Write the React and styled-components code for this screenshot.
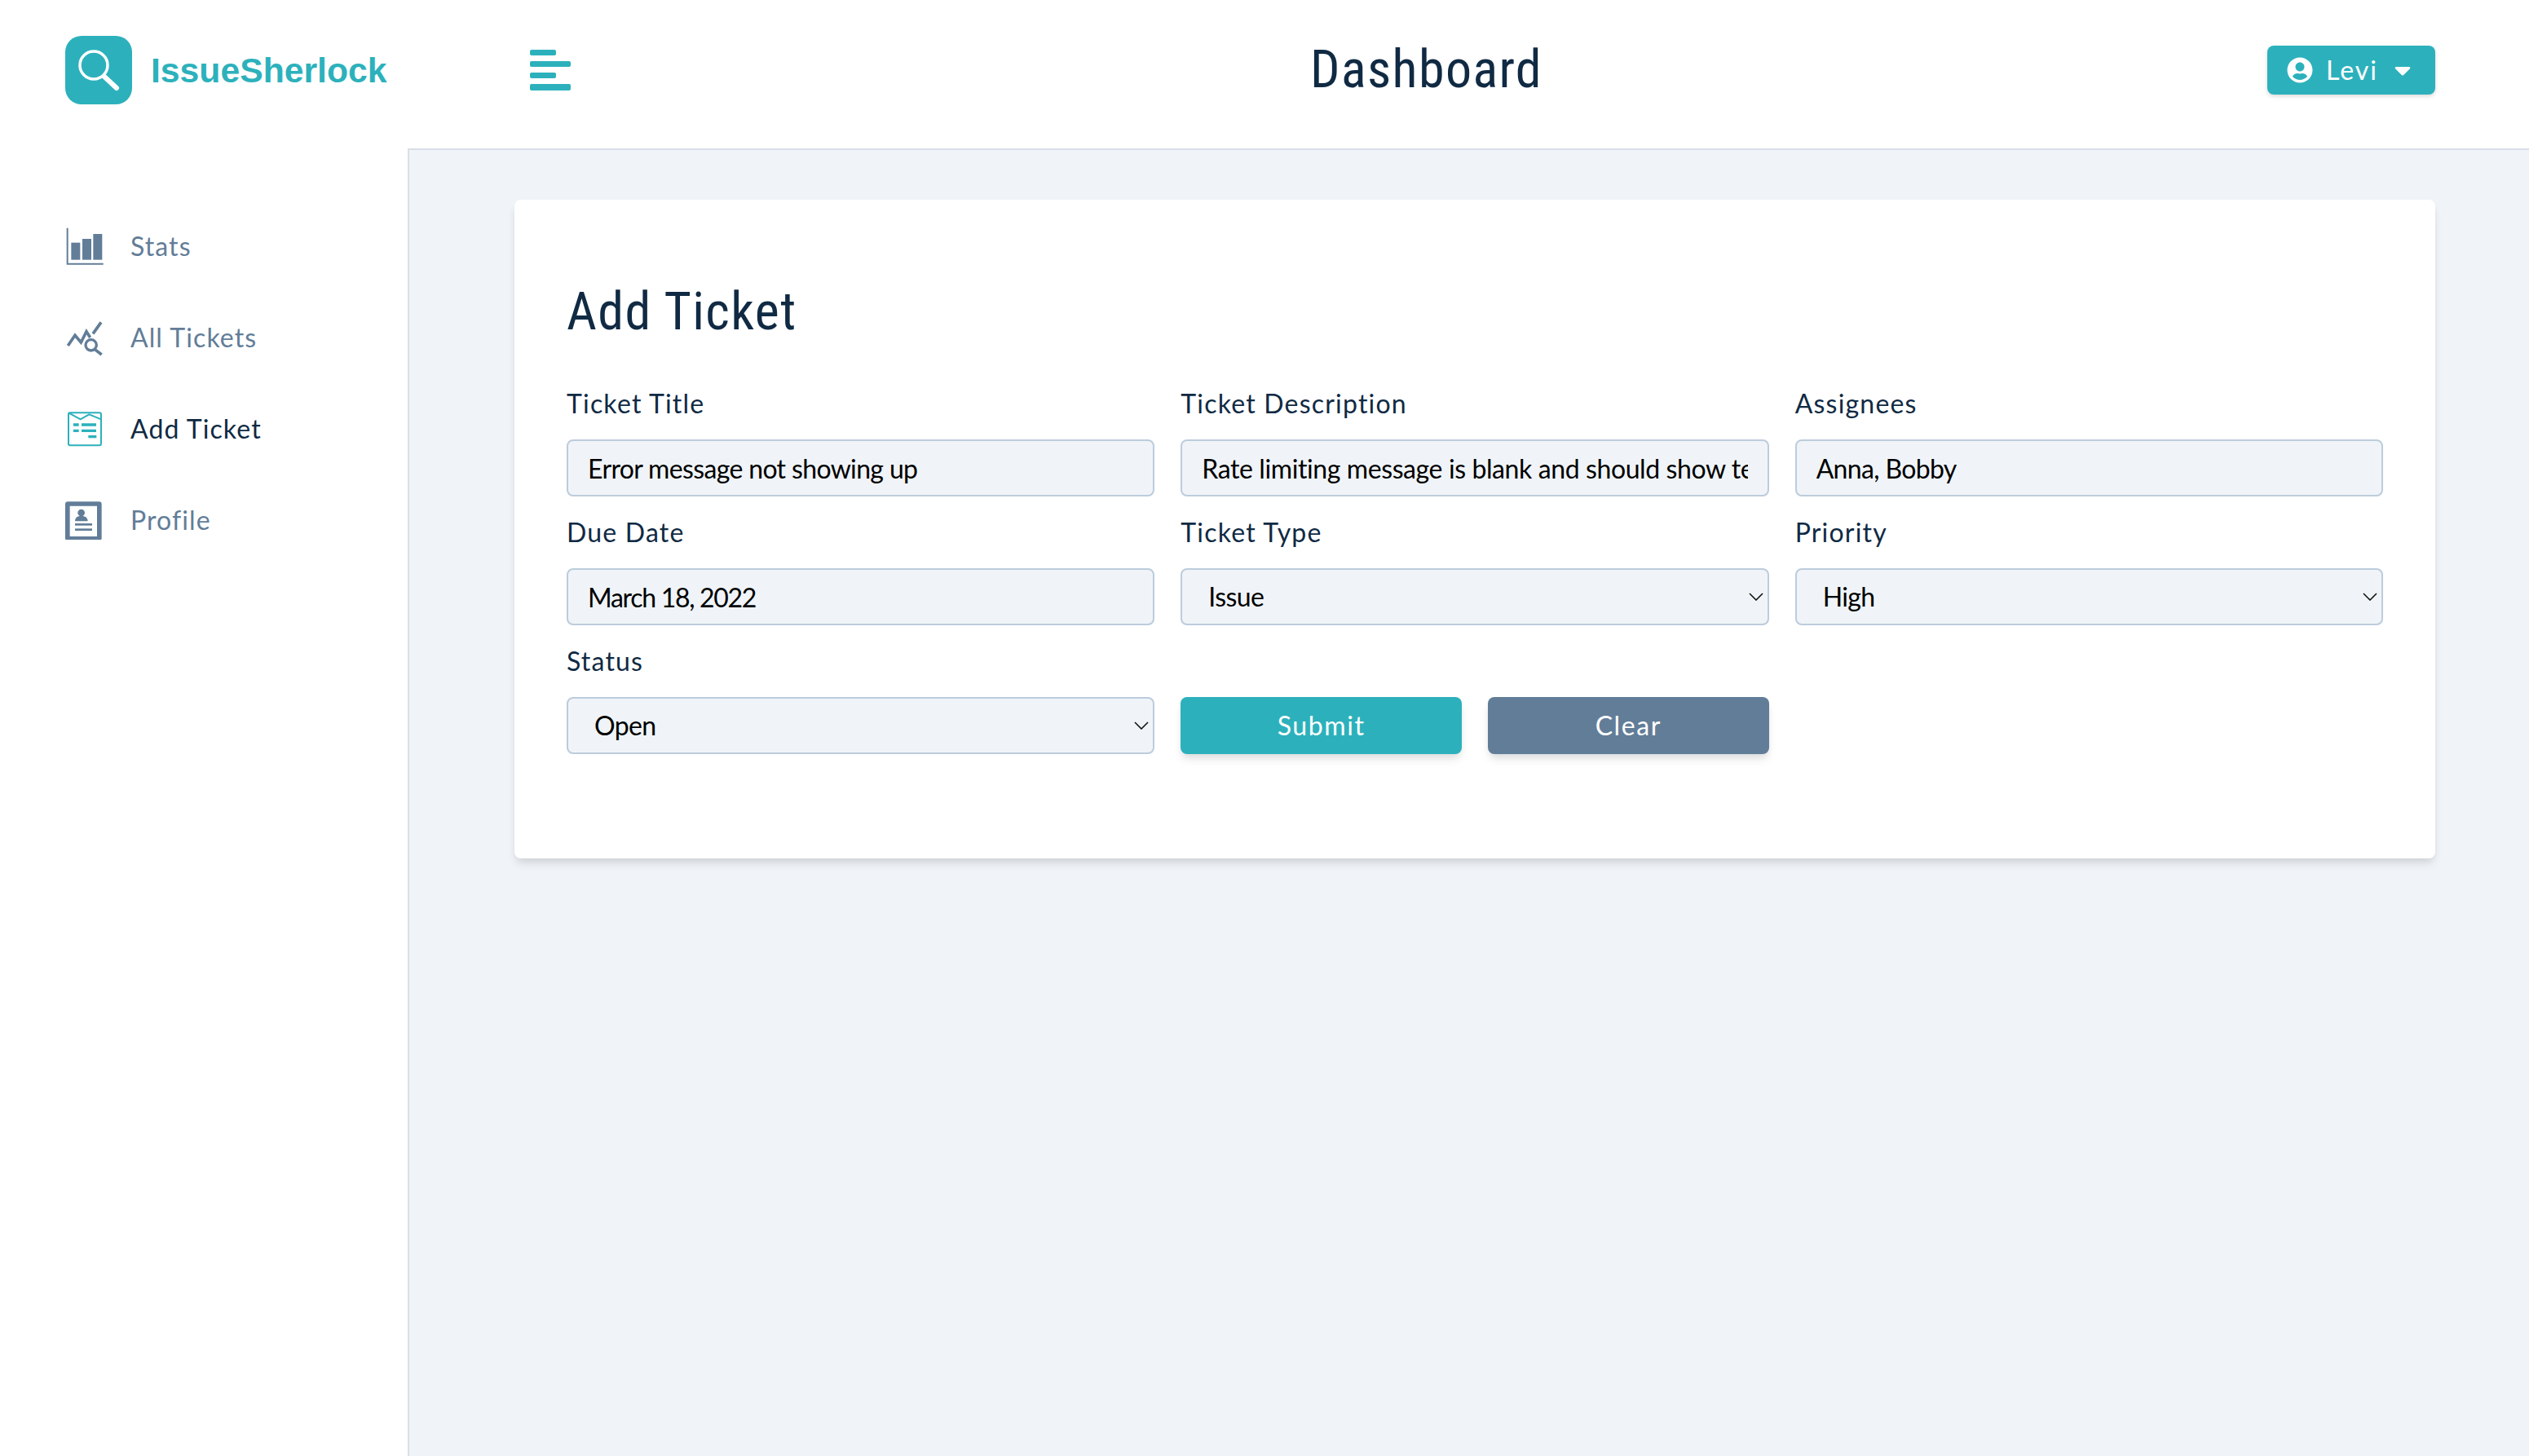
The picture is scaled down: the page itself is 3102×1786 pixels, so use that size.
import React from 'react';
import styled, { createGlobalStyle } from 'styled-components';
import { FaUserCircle, FaCaretDown } from 'react-icons/fa';

const Global = createGlobalStyle`
  * { box-sizing: border-box; }
  html, body { margin: 0; padding: 0; }
  body { font-family: Lato, "Open Sans", sans-serif; background: #fff; color: #102a43; }
`;
const BODY = 'Lato, "Open Sans", sans-serif';
const COND = '"Roboto Condensed", "Liberation Sans Narrow", Roboto, sans-serif';

const Page = styled.div`display: flex; width: 3102px; height: 1786px; overflow: hidden;`;
const Sidebar = styled.aside`width: 502px; flex: none; display: flex; flex-direction: column; background: #fff;`;
const Brand = styled.div`display: flex; align-items: flex-start; gap: 23px; padding: 44px 0 0 80px; height: 182px; flex: none;`;
const LogoBox = styled.svg`width: 82px; height: 84px; display: block; flex: none;`;
const BrandName = styled.span`font: 700 42.7px/84px "Liberation Sans", Arial, sans-serif; color: #2cb1bc;`;
const Nav = styled.nav`display: flex; flex-direction: column; flex: 1; padding-top: 64px; border-right: 2px solid #d9dfe7;`;
const NavItem = styled.a`
  display: flex; align-items: center; height: 112px; padding-left: 80px; gap: 32px;
  font: 400 32px/48px ${BODY}; letter-spacing: 1.1px;
  color: ${p => (p.$active ? '#102a43' : '#627d98')};
  svg { width: 48px; height: 48px; flex: none; display: block; }
`;
const Main = styled.div`flex: 1; display: flex; flex-direction: column; background: #f0f4f8;`;
const Header = styled.header`
  height: 184px; flex: none; display: flex; align-items: center; justify-content: space-between;
  padding: 0 115px 10px 148px; background: #fff; border-bottom: 2px solid #d9dfe7;
`;
const Burger = styled.svg`width: 50px; height: 50px; display: block; flex: none;`;
const Title = styled.h1`margin: 0 0 0 18px; font: 400 64px/72px ${COND}; letter-spacing: 1.4px; color: #102a43; font-stretch: 75%;`;
const UserButton = styled.button`
  width: 206px; height: 60px; border: 0; border-radius: 8px; background: #2cb1bc; color: #fff;
  box-shadow: 0 2px 6px rgba(0,0,0,.1), 0 2px 4px rgba(0,0,0,.06);
  display: flex; align-items: center; padding: 0 0 0 24px;
  font: 400 32px/48px ${BODY}; letter-spacing: 2px;
`;
const UserName = styled.span`margin: 0 14px 0 16px;`;
const Content = styled.main`padding: 61px 115px 0 129px;`;
const Card = styled.section`
  background: #fff; border-radius: 8px; padding: 102px 64px 128px;
  box-shadow: 0 8px 12px -2px rgba(0,0,0,.1), 0 4px 8px -2px rgba(0,0,0,.06);
`;
const CardTitle = styled.h2`margin: 0 0 52px; font: 400 64px/72px ${COND}; letter-spacing: 1.4px; color: #102a43; font-stretch: 75%;`;
const FormGrid = styled.form`display: grid; grid-template-columns: repeat(3, 1fr); column-gap: 32px; row-gap: 20px; align-items: end;`;
const Field = styled.div`display: flex; flex-direction: column;`;
const Label = styled.label`font: 400 32px/48px ${BODY}; letter-spacing: 1.2px; color: #102a43; margin-bottom: 20px;`;
const Input = styled.input`
  width: 100%; height: 70px; border: 2px solid #bcccdc; border-radius: 8px; background: #f0f4f8;
  padding: 0 24px; font: 400 32px/48px ${BODY}; color: #000; outline: none;
  letter-spacing: ${p => p.$tracking || '-0.65px'};
`;
const SelectWrap = styled.div`position: relative; height: 70px;`;
const Select = styled.select`
  appearance: none; width: 100%; height: 70px; border: 2px solid #bcccdc; border-radius: 8px; background: #f0f4f8;
  padding: 0 32px; font: 400 32px/48px ${BODY}; letter-spacing: -0.6px; color: #000; outline: none;
`;
const Chevron = styled.svg`
  position: absolute; right: 7px; top: 30px; width: 18px; height: 10px; pointer-events: none;
  fill: none; stroke: #111; stroke-width: 1.6;
`;
const ButtonRow = styled.div`display: grid; grid-template-columns: 1fr 1fr; gap: 32px;`;
const Action = styled.button`
  height: 70px; border: 0; border-radius: 8px; color: #fff;
  background: ${p => (p.$secondary ? '#627d98' : '#2cb1bc')};
  box-shadow: 0 8px 12px -2px rgba(0,0,0,.1), 0 4px 8px -2px rgba(0,0,0,.06);
  font: 400 32px/48px ${BODY}; letter-spacing: 1.6px;
`;

const StatsIcon = () => (
  <svg viewBox="90 53 144 144" fill="#627d98">
    <path d="M95 58h6v129h129v6H95z" />
    <rect x="112" y="112" width="33" height="63" />
    <rect x="153" y="98" width="33" height="77" />
    <rect x="193" y="80" width="33" height="95" />
  </svg>
);
const TicketsIcon = () => (
  <svg viewBox="90 390 144 144" fill="none" stroke="#627d98" strokeWidth="11">
    <path d="M100 492l26-38 22 26 20-40 14 22M192 448l30-42" />
    <circle cx="185" cy="490" r="20" strokeWidth="10" />
    <path d="M198 505l26 20" strokeWidth="11" />
  </svg>
);
const AddIcon = () => (
  <svg viewBox="90 725 144 144" fill="none" stroke="#2cb1bc">
    <rect x="102" y="738" width="120" height="120" rx="6" strokeWidth="6" />
    <path d="M102 738l44 24 32-18 44 18" strokeWidth="6" fill="none" />
    <path d="M120 782h20M150 782h54M120 804h20M150 804h54M175 826h30" strokeWidth="10" />
  </svg>
);
const ProfileIcon = () => (
  <svg viewBox="90 1058 144 144" fill="#627d98">
    <path fillRule="evenodd" d="M100 1062h114a10 10 0 0 1 10 10v124a10 10 0 0 1-10 10H100a10 10 0 0 1-10-10v-124a10 10 0 0 1 10-10zm7 16v112h100v-112z" />
    <circle cx="149" cy="1103" r="13" />
    <path d="M126 1134c0-14 10-20 23-20s24 6 24 20z" />
    <rect x="126" y="1142" width="63" height="8" />
    <rect x="126" y="1161" width="63" height="8" />
  </svg>
);
const Pick = ({ options }) => (
  <SelectWrap>
    <Select defaultValue={options[0]}>{options.map(o => <option key={o}>{o}</option>)}</Select>
    <Chevron viewBox="0 0 18 10"><path d="M1 1l8 8 8-8" /></Chevron>
  </SelectWrap>
);

export default function App() {
  return (
    <Page>
      <Global />
      <Sidebar>
        <Brand>
          <LogoBox viewBox="0 0 82 84">
            <rect width="82" height="84" rx="20" fill="#2cb1bc" />
            <circle cx="35" cy="36" r="17" fill="none" stroke="#fff" strokeWidth="3.5" />
            <path d="M48 50l15 14" stroke="#fff" strokeWidth="6" strokeLinecap="round" />
          </LogoBox>
          <BrandName>IssueSherlock</BrandName>
        </Brand>
        <Nav>
          <NavItem><StatsIcon />Stats</NavItem>
          <NavItem><TicketsIcon />All Tickets</NavItem>
          <NavItem $active><AddIcon />Add Ticket</NavItem>
          <NavItem><ProfileIcon />Profile</NavItem>
        </Nav>
      </Sidebar>
      <Main>
        <Header>
          <Burger viewBox="0 0 50 50" fill="#2cb1bc">
            <rect x="0" y="0" width="32" height="7" rx="2" />
            <rect x="0" y="14" width="50" height="7" rx="2" />
            <rect x="0" y="28" width="32" height="7" rx="2" />
            <rect x="0" y="42" width="50" height="8" rx="2" />
          </Burger>
          <Title>Dashboard</Title>
          <UserButton type="button">
            <FaUserCircle size={32} />
            <UserName>Levi</UserName>
            <FaCaretDown size={32} />
          </UserButton>
        </Header>
        <Content>
          <Card>
            <CardTitle>Add Ticket</CardTitle>
            <FormGrid>
              <Field><Label>Ticket Title</Label><Input readOnly value="Error message not showing up" /></Field>
              <Field><Label>Ticket Description</Label><Input readOnly $tracking="-0.4px" value="Rate limiting message is blank and should show text" /></Field>
              <Field><Label>Assignees</Label><Input readOnly value="Anna, Bobby" /></Field>
              <Field><Label>Due Date</Label><Input readOnly $tracking="-1.3px" value="March 18, 2022" /></Field>
              <Field><Label>Ticket Type</Label><Pick options={['Issue', 'Bug']} /></Field>
              <Field><Label>Priority</Label><Pick options={['High', 'Low']} /></Field>
              <Field><Label>Status</Label><Pick options={['Open', 'Closed']} /></Field>
              <ButtonRow>
                <Action type="button">Submit</Action>
                <Action type="button" $secondary>Clear</Action>
              </ButtonRow>
            </FormGrid>
          </Card>
        </Content>
      </Main>
    </Page>
  );
}
